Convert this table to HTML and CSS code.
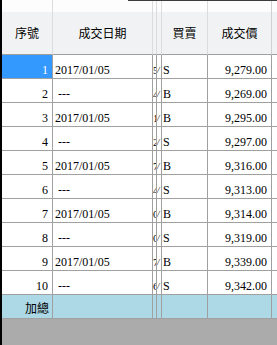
FILE: index.html
```html
<!DOCTYPE html>
<html>
<head>
<meta charset="utf-8">
<link rel="stylesheet" href="styles.css">
</head>
<body>
<div class="grid">
  <div class="row head">
    <div class="c c1">序號</div>
    <div class="c c2">成交日期</div>
    <div class="c c3"></div>
    <div class="c c4"></div>
    <div class="c c5">買賣</div>
    <div class="c c6">成交價</div>
    <div class="c c7"></div>
  </div>
  <div class="row data">
    <div class="c c1 sel">1</div><div class="c c2">2017/01/05</div><div class="c c3">5</div><div class="c c4">/</div><div class="c c5">S</div><div class="c c6">9,279.00</div><div class="c c7"></div>
  </div>
  <div class="row data">
    <div class="c c1">2</div><div class="c c2 dash">---</div><div class="c c3">4</div><div class="c c4">/</div><div class="c c5">B</div><div class="c c6">9,269.00</div><div class="c c7"></div>
  </div>
  <div class="row data">
    <div class="c c1">3</div><div class="c c2">2017/01/05</div><div class="c c3">1</div><div class="c c4">/</div><div class="c c5">B</div><div class="c c6">9,295.00</div><div class="c c7"></div>
  </div>
  <div class="row data">
    <div class="c c1">4</div><div class="c c2 dash">---</div><div class="c c3">2</div><div class="c c4">/</div><div class="c c5">S</div><div class="c c6">9,297.00</div><div class="c c7"></div>
  </div>
  <div class="row data">
    <div class="c c1">5</div><div class="c c2">2017/01/05</div><div class="c c3">7</div><div class="c c4">/</div><div class="c c5">B</div><div class="c c6">9,316.00</div><div class="c c7"></div>
  </div>
  <div class="row data">
    <div class="c c1">6</div><div class="c c2 dash">---</div><div class="c c3">4</div><div class="c c4">/</div><div class="c c5">S</div><div class="c c6">9,313.00</div><div class="c c7"></div>
  </div>
  <div class="row data">
    <div class="c c1">7</div><div class="c c2">2017/01/05</div><div class="c c3">0</div><div class="c c4">/</div><div class="c c5">B</div><div class="c c6">9,314.00</div><div class="c c7"></div>
  </div>
  <div class="row data">
    <div class="c c1">8</div><div class="c c2 dash">---</div><div class="c c3">0</div><div class="c c4">/</div><div class="c c5">S</div><div class="c c6">9,319.00</div><div class="c c7"></div>
  </div>
  <div class="row data">
    <div class="c c1">9</div><div class="c c2">2017/01/05</div><div class="c c3">7</div><div class="c c4">/</div><div class="c c5">B</div><div class="c c6">9,339.00</div><div class="c c7"></div>
  </div>
  <div class="row data">
    <div class="c c1">10</div><div class="c c2 dash">---</div><div class="c c3">6</div><div class="c c4">/</div><div class="c c5">S</div><div class="c c6">9,342.00</div><div class="c c7"></div>
  </div>
  <div class="row total">
    <div class="c c1">加總</div><div class="c c2"></div><div class="c c3"></div><div class="c c4"></div><div class="c c5"></div><div class="c c6"></div><div class="c c7"></div>
  </div>
</div>
</body>
</html>
```
FILE: styles.css
```css
html, body {
  margin: 0;
  padding: 0;
}
body {
  width: 277px;
  height: 345px;
  overflow: hidden;
}
.grid {
  height: 345px;
  box-sizing: border-box;
  border-left: 2px solid #000;
  background: #ababab;
  font-family: "Liberation Serif", serif;
  font-size: 12px;
  color: #000;
}
.row {
  display: grid;
  grid-template-columns: 51px 100px 4px 5px 46px 64px 1fr;
}
.c {
  box-sizing: border-box;
  border-right: 1px solid #a0a0a0;
  border-bottom: 1px solid #a0a0a0;
  overflow: hidden;
  white-space: nowrap;
  display: flex;
  align-items: center;
}
.c7 {
  border-right: none;
}

/* header */
.head {
  position: relative;
  height: 55px;
  font-family: "Noto Sans CJK TC", "Noto Sans", sans-serif;
  font-size: 12px;
}
.head::before {
  content: "";
  position: absolute;
  left: 126px;
  right: 0;
  top: 0;
  height: 1px;
  background: #3c3c3c;
}
.head .c {
  justify-content: center;
  padding-top: 10px;
  background: linear-gradient(#fdfdfd 0, #fdfdfd 12px, #f1f2f4 12px, #f1f2f4 100%);
  border-right-color: #dcdcdc;
  border-bottom-color: #a0a0a0;
}
.head .c6 {
  border-right-color: #d0d0d0;
}

/* data */
.data {
  height: 24px;
}
.data .c {
  background: #fff;
  padding-top: 7px;
}
.data .c1 {
  justify-content: flex-end;
  padding-right: 4px;
}
.data .sel {
  background: #3399ff;
  color: #fff;
}
.data .c2 {
  padding-left: 2px;
}
.data .c2.dash {
  padding-left: 5px;
}
.data .c3 {
  padding-left: 0;
  font-size: 11px;
}
.data .c4 {
  padding-left: 0;
  font-size: 9px;
  font-style: italic;
}
.data .c5 {
  padding-left: 1px;
}
.data .c6 {
  justify-content: flex-end;
  padding-right: 4px;
}

/* total */
.total {
  height: 24px;
  font-family: "Noto Sans CJK TC", "Noto Sans", sans-serif;
}
.total .c {
  background: #add8e6;
  padding-top: 2px;
}
.total .c1 {
  justify-content: flex-end;
  padding-right: 3px;
}
```
